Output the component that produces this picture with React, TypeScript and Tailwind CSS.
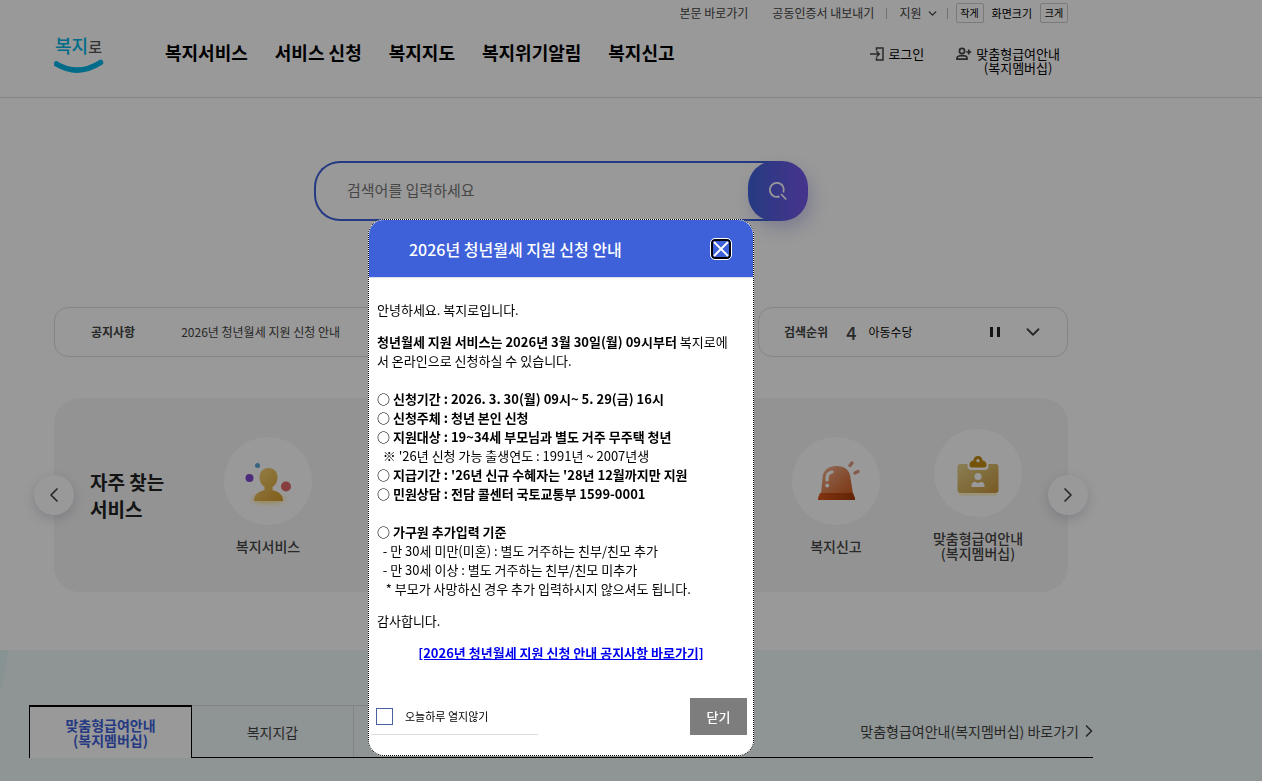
import { useState } from 'react'
import type { ReactNode } from 'react'
import { ChevronDown, ChevronLeft, ChevronRight, X } from 'lucide-react'

const menus = ['복지서비스', '서비스 신청', '복지지도', '복지위기알림', '복지신고']

function Logo() {
  return (
    <svg width="50" height="43" viewBox="0 0 50 43" role="img" aria-label="복지로">
      <text x="1" y="22" fontSize="18" fontWeight="500" fill="#00b4e5">
        복지
        <tspan fill="#555" fontSize="15">로</tspan>
      </text>
      <path d="M2.500 33Q24 46 46.500 31.500" fill="none" stroke="#00b4e5" strokeWidth="5.500" strokeLinecap="round" />
    </svg>
  )
}

function LoginIcon() {
  return (
    <svg width="14" height="14" viewBox="0 0 14 14" fill="none" stroke="#444" strokeWidth="1.500">
      <path d="M6.500 3.500V1H13V13H6.500V10.500" />
      <path d="M0 7H9M6.500 4.200L9.300 7L6.500 9.800" />
    </svg>
  )
}

function MemberIcon() {
  return (
    <svg width="16" height="14" viewBox="0 0 16 14" fill="none" stroke="#444" strokeWidth="1.700">
      <circle cx="6" cy="4" r="2.600" />
      <path d="M1 12.200V11C1 9.500 3.500 8.700 6 8.700S11 9.500 11 11V12.200Z" />
      <path d="M12.800 2.500V7.500M10.300 5H15.300" />
    </svg>
  )
}

function SearchIcon() {
  return (
    <svg width="20" height="20" viewBox="0 0 20 20" fill="none" stroke="#fff" strokeWidth="1.700">
      <path d="M11.500 15.400A7 7 0 1 1 15.400 11.500" />
      <path d="M13 13L18.200 18.500" />
    </svg>
  )
}

function PersonIcon() {
  return (
    <svg width="50" height="44" viewBox="-1.500 -3 50 44" overflow="visible">
      <defs>
        <linearGradient id="person" x1="0" y1="0" x2="1" y2="1">
          <stop offset="0" stopColor="#f5d57c" />
          <stop offset="1" stopColor="#d69a2a" />
        </linearGradient>
        <filter id="glow" x="-30%" y="-100%" width="160%" height="300%">
          <feGaussianBlur stdDeviation="2.500" />
        </filter>
      </defs>
      <ellipse cx="24" cy="37" rx="16" ry="4" fill="#ffdf80" filter="url(#glow)" />
      <path
        d="M24 6C18.500 6 15 10 15 15.500C15 20 17 23 20 25V28C16 29.500 9.500 30.500 9.500 39H38.500C38.500 30.500 32 29.500 28 28V25C31 23 33 20 33 15.500C33 10 29.500 6 24 6Z"
        fill="url(#person)"
      />
      <circle cx="13" cy="3.500" r="2.500" fill="#58a9cf" />
      <circle cx="5" cy="16" r="4" fill="#8048cf" />
      <circle cx="41.500" cy="24.500" r="5" fill="#e0686a" />
    </svg>
  )
}

function SirenIcon() {
  return (
    <svg width="48" height="48" viewBox="-4.500 -4 48 48" overflow="visible">
      <defs>
        <linearGradient id="siren" x1="0" y1="0" x2="1" y2="1">
          <stop offset="0" stopColor="#f0b294" />
          <stop offset="1" stopColor="#cf5a1c" />
        </linearGradient>
        <linearGradient id="sirenBase" x1="0" y1="0" x2="1" y2="0">
          <stop offset="0" stopColor="#d9571c" />
          <stop offset="1" stopColor="#a23c08" />
        </linearGradient>
      </defs>
      <path d="M4.500 33L6 17C6.500 9 12 5 20 5S33.500 9 34 17L36.500 33Z" fill="url(#siren)" />
      <path d="M3.500 32H36.500L38.500 37V39H1.500V37Z" fill="url(#sirenBase)" />
      <path d="M10.500 19V17.500C10.500 14 12.500 11.500 15.500 11" fill="none" stroke="#fff" strokeWidth="3.200" strokeLinecap="round" />
      <circle cx="10.700" cy="24.500" r="1.900" fill="#fff" />
      <path d="M33.500 4.500L35.500 2M38.500 12L41.500 10.500" stroke="#dd9a80" strokeWidth="3.500" strokeLinecap="round" />
    </svg>
  )
}

function BadgeIcon() {
  return (
    <svg width="48" height="48" viewBox="-2 -6 48 48" overflow="visible">
      <defs>
        <linearGradient id="badge" x1="0" y1="0" x2="1" y2="1">
          <stop offset="0" stopColor="#e6d38c" />
          <stop offset="1" stopColor="#c8963c" />
        </linearGradient>
      </defs>
      <rect x="3" y="36" width="38" height="5" rx="2" fill="#ffeaa0" opacity=".5" />
      <rect x="1.500" y="9" width="41" height="29" rx="3" fill="url(#badge)" />
      <path d="M11.500 8V11Q11.500 15 15.500 15H28.500Q32.500 15 32.500 11V8Z" fill="#fff" />
      <path d="M13.500 10C13.500 7 15.500 5.500 17.500 5.500C17.500 2.500 19.500 1 22 1S26.500 2.500 26.500 5.500C28.500 5.500 30.500 7 30.500 10Q30.500 12.500 28 12.500H16Q13.500 12.500 13.500 10Z" fill="#c48a10" />
      <circle cx="22" cy="5.700" r="1.600" fill="#fff" />
      <circle cx="22" cy="21.500" r="3.600" fill="#fff" />
      <path d="M15.500 32Q15 27 19 26.800Q22 29 25 26.800Q29 27 28.500 32Z" fill="#fff" />
    </svg>
  )
}

function ServiceItem({ icon, className, children }: { icon: ReactNode; className: string; children: ReactNode }) {
  return (
    <a href="#service" className={`flex flex-col items-center gap-[14px] ${className}`}>
      <span className="flex h-[88px] w-[88px] items-center justify-center rounded-full bg-white">{icon}</span>
      <span className="text-center text-sm leading-[15px] font-medium text-[#444]">{children}</span>
    </a>
  )
}

function NoticeModal({ onClose }: { onClose: () => void }) {
  return (
    <div className="fixed inset-0 z-10 flex items-start justify-center bg-black/40 pt-[219px] pr-[140px]">
      <div
        role="dialog"
        aria-labelledby="notice-title"
        className="w-[386px] overflow-hidden rounded-2xl border border-dotted border-black bg-white"
      >
        <div className="flex h-[58px] items-center justify-between border-b border-[#dde] bg-[#3e61d9] pr-[22px] pl-10">
          <h2 id="notice-title" className="text-base font-medium text-white">
            2026년 청년월세 지원 신청 안내
          </h2>
          <button
            type="button"
            aria-label="닫기"
            onClick={onClose}
            className="flex h-5 w-5 items-center justify-center rounded border-2 border-black text-white outline outline-white"
          >
            <X size={26} strokeWidth={1.7} className="shrink-0" />
          </button>
        </div>

        <div className="space-y-[13px] px-2 pt-[22px] text-[13px] leading-[19px] whitespace-nowrap text-black">
          <p>안녕하세요. 복지로입니다.</p>
          <p>
            <b>청년월세 지원 서비스는 2026년 3월 30일(월) 09시부터</b> 복지로에
            <br />
            서 온라인으로 신청하실 수 있습니다.
            <br />
            <br />
            <b>○ 신청기간 : 2026. 3. 30(월) 09시~ 5. 29(금) 16시</b>
            <br />
            <b>○ 신청주체 : 청년 본인 신청</b>
            <br />
            <b>○ 지원대상 : 19~34세 부모님과 별도 거주 무주택 청년</b>
            <br />
            &nbsp; ※ '26년 신청 가능 출생연도 : 1991년 ~ 2007년생
            <br />
            <b>○ 지급기간 : '26년 신규 수혜자는 '28년 12월까지만 지원</b>
            <br />
            <b>○ 민원상담 : 전담 콜센터 국토교통부 1599-0001</b>
            <br />
            <br />
            <b>○ 가구원 추가입력 기준</b>
            <br />
            &nbsp; - 만 30세 미만(미혼) : 별도 거주하는 친부/친모 추가
            <br />
            &nbsp; - 만 30세 이상 : 별도 거주하는 친부/친모 미추가
            <br />
            &nbsp; &nbsp;* 부모가 사망하신 경우 추가 입력하시지 않으셔도 됩니다.
          </p>
          <p>감사합니다.</p>
          <p className="text-center">
            <a href="#notice" className="font-bold text-[#0000ee] underline">
              [2026년 청년월세 지원 신청 안내 공지사항 바로가기]
            </a>
          </p>
        </div>

        <div className="mt-9 mb-5 flex justify-between pr-[6px] pl-[2px]">
          <label className="flex w-[167px] items-center gap-3 border-b border-[#ddd] pl-[5px] text-[11px] text-black">
            <input type="checkbox" className="h-[17px] w-[17px] appearance-none border border-[#4a5f9e] bg-white" />
            오늘하루 열지않기
          </label>
          <button type="button" onClick={onClose} className="h-[37px] w-[57px] bg-[#7d7d7d] text-[13px] font-medium text-white">
            닫기
          </button>
        </div>
      </div>
    </div>
  )
}

export default function App() {
  const [isModalOpen, setIsModalOpen] = useState(true)
  const [keyword, setKeyword] = useState('')

  return (
    <div className="flex min-h-screen flex-col bg-white font-['Noto_Sans_CJK_KR',sans-serif] text-[#444]">
      <header className="border-b border-[#ddd] pr-[194px] pl-[54px]">
        <div className="flex items-center justify-end pt-[3px] text-xs leading-5">
          <a href="#content">본문 바로가기</a>
          <a href="#cert" className="ml-6">공동인증서 내보내기</a>
          <button type="button" className="ml-3 flex items-center gap-1">
            <span className="mr-2 h-[11px] w-px bg-[#bbb]" />
            지원
            <ChevronDown size={13} strokeWidth={2.5} />
          </button>
          <span className="mx-2 h-[11px] w-px bg-[#bbb]" />
          <button type="button" className="h-5 w-7 rounded-xs border border-[#ccc] text-[10px] leading-4 text-black">
            작게
          </button>
          <span className="mx-2 text-[11px] text-black">화면크기</span>
          <button type="button" className="h-5 w-7 rounded-xs border border-[#ccc] text-[10px] leading-4 text-black">
            크게
          </button>
        </div>

        <div className="flex h-[74px] items-start pt-2">
          <a href="#home">
            <Logo />
          </a>
          <nav className="ml-[61px] flex gap-[27px] pt-[9px] text-lg leading-6 font-bold text-black">
            {menus.map((menu) => (
              <a key={menu} href="#menu">
                {menu}
              </a>
            ))}
          </nav>
          <div className="ml-auto flex items-start gap-8 pt-4 pr-2 text-[13px] leading-[14px] text-black">
            <a href="#login" className="flex items-center gap-1">
              <LoginIcon />
              로그인
            </a>
            <a href="#member" className="flex items-start gap-1 text-center">
              <MemberIcon />
              <span>
                맞춤형급여안내
                <br />
                (복지멤버십)
              </span>
            </a>
          </div>
        </div>
      </header>

      <main className="flex flex-1 flex-col">
        <div className="pt-[63px] pr-[194px] pb-[58px] pl-[54px]">
          <form className="mx-auto flex w-[494px] rounded-[26px] bg-white" onSubmit={(e) => e.preventDefault()}>
            <input
              type="text"
              aria-label="검색어"
              placeholder="검색어를 입력하세요"
              value={keyword}
              onChange={(e) => setKeyword(e.target.value)}
              className="-mr-[30px] h-[60px] min-w-0 flex-1 rounded-l-[26px] border-2 border-r-0 border-[#3e61d9] pb-1 pl-[31px] text-[15px] placeholder:text-[#777]"
            />
            <button
              type="submit"
              aria-label="검색"
              className="flex h-[60px] w-[60px] items-center justify-center rounded-[26px] bg-linear-to-r from-[#3e61d9] to-[#7557e9] shadow-[4px_8px_16px_rgba(80,80,200,0.25)]"
            >
              <SearchIcon />
            </button>
          </form>

          <div className="mt-[86px] flex gap-[10px]">
            <section className="flex h-[50px] flex-1 items-center rounded-[14px] border border-[#ddd] pl-9">
              <h2 className="text-xs font-bold">공지사항</h2>
              <a href="#notice" className="ml-[46px] text-xs">
                2026년 청년월세 지원 신청 안내
              </a>
            </section>
            <section className="flex h-[50px] w-[310px] items-center rounded-[14px] border border-[#ddd] pr-[23px] pl-[25px]">
              <h2 className="text-xs font-bold">검색순위</h2>
              <span className="ml-[18px] text-lg leading-6 font-medium">4</span>
              <a href="#rank" className="ml-3 text-xs text-black">
                아동수당
              </a>
              <button type="button" aria-label="일시정지" className="ml-auto flex gap-1">
                <span className="h-[10px] w-[3px] bg-[#222]" />
                <span className="h-[10px] w-[3px] bg-[#222]" />
              </button>
              <button type="button" aria-label="펼치기" className="ml-[22px]">
                <ChevronDown size={22} strokeWidth={2} />
              </button>
            </section>
          </div>

          <section className="relative mt-[41px] flex h-[194px] items-center rounded-[26px] bg-[#f5f5f5] pr-[19px] pl-9">
            <h2 className="w-[107px] text-[19px] leading-[27px] font-bold text-[#222]">
              자주 찾는
              <br />
              서비스
            </h2>
            <div className="grid flex-1 grid-cols-6 items-center">
              <ServiceItem className="col-start-1" icon={<PersonIcon />}>
                복지서비스
              </ServiceItem>
              <ServiceItem className="col-start-5" icon={<SirenIcon />}>
                복지신고
              </ServiceItem>
              <ServiceItem className="col-start-6" icon={<BadgeIcon />}>
                맞춤형급여안내
                <br />
                (복지멤버십)
              </ServiceItem>
            </div>
            <button
              type="button"
              aria-label="이전"
              className="absolute top-[77px] -left-5 flex h-10 w-10 items-center justify-center rounded-full bg-white shadow-[0_4px_12px_rgba(60,70,110,0.2)]"
            >
              <ChevronLeft size={24} strokeWidth={1.7} />
            </button>
            <button
              type="button"
              aria-label="다음"
              className="absolute top-[77px] -right-5 flex h-10 w-10 items-center justify-center rounded-full bg-white shadow-[0_4px_12px_rgba(60,70,110,0.2)]"
            >
              <ChevronRight size={24} strokeWidth={1.7} />
            </button>
          </section>
        </div>

        <section className="relative flex-1 bg-[#eef7f7] pt-[55px] pr-[169px] pb-6 pl-[29px]">
          <svg className="absolute top-0 left-0" width="8" height="41" viewBox="0 0 8 41" aria-hidden="true">
            <path d="M0 0H8Q6 22 0 41Z" fill="#e2f3f5" />
          </svg>
          <div className="flex h-[53px] border-b border-black">
            <button
              type="button"
              className="-mb-px w-[163px] border border-t-2 border-b-0 border-black bg-white text-sm leading-[15px] font-bold text-[#3e61d9]"
            >
              맞춤형급여안내
              <br />
              (복지멤버십)
            </button>
            <button type="button" className="w-[162px] border-t border-r border-[#ddd] text-sm">
              복지지갑
            </button>
            <span className="w-[162px] border-t border-r border-[#ddd]" />
            <span className="w-[162px] border-t border-r border-[#ddd]" />
            <a href="#member" className="-mr-[6px] ml-auto flex items-center text-sm">
              맞춤형급여안내(복지멤버십) 바로가기
              <ChevronRight size={20} strokeWidth={2} />
            </a>
          </div>
        </section>
      </main>

      {isModalOpen && <NoticeModal onClose={() => setIsModalOpen(false)} />}
    </div>
  )
}
